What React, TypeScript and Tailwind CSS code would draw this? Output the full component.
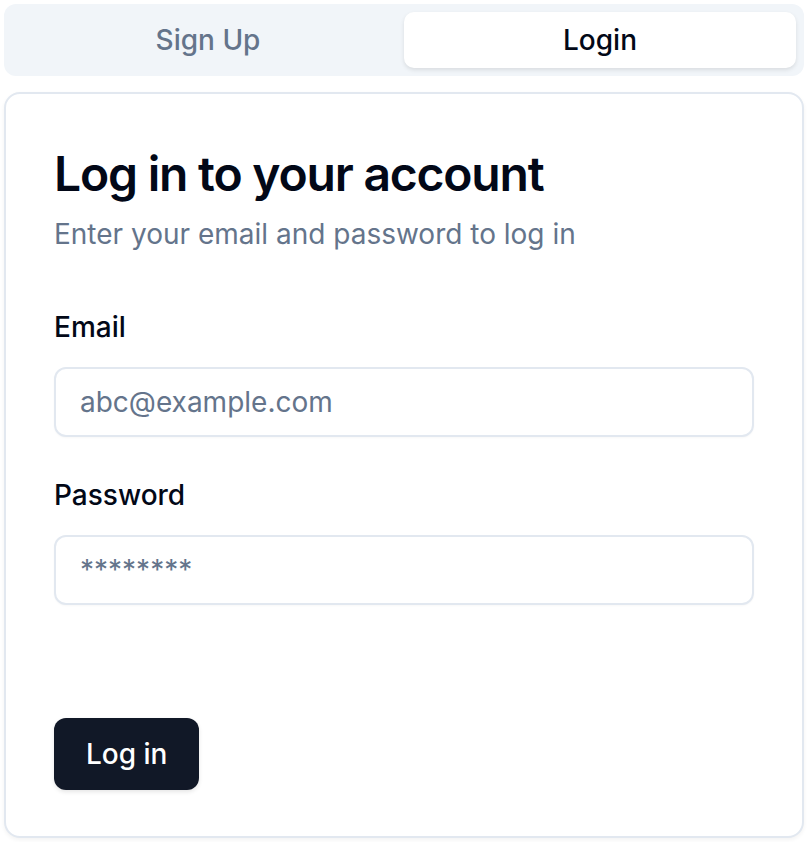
import React from "react";

export default function App() {
  return (
    <div className="w-[808px] p-1 bg-white" style={{ fontFamily: "Inter, 'Noto Sans', sans-serif" }}>
      <div className="flex h-[72px] w-[800px] items-center rounded-[12px] bg-[#f1f5f9] p-2">
        <button className="flex h-[56px] flex-1 items-center justify-center rounded-[10px] text-[28px] font-medium leading-[40px] text-[#64748b]">
          Sign Up
        </button>
        <button className="flex h-[56px] flex-1 items-center justify-center rounded-[10px] bg-white text-[28px] font-medium leading-[40px] text-[#020817] shadow-[0_2px_4px_rgba(0,0,0,0.1)]">
          Login
        </button>
      </div>
      <div className="mt-4 w-[800px] rounded-[16px] border-2 border-[#e2e8f0] bg-white px-[48px] pb-[46px] pt-[48px] shadow-[0_2px_4px_rgba(0,0,0,0.05)]">
        <h1 className="text-[48px] font-semibold leading-[64px] tracking-[-0.025em] text-[#020817]">
          Log in to your account
        </h1>
        <p className="mt-2 text-[28px] leading-[40px] text-[#64748b]">
          Enter your email and password to log in
        </p>
        <div className="mt-[53px]">
          <label className="block text-[28px] font-medium leading-[40px] text-[#020817]">Email</label>
          <input
            type="email"
            placeholder="abc@example.com"
            className="mt-[20px] block h-[70px] w-[700px] rounded-[12px] border-2 border-[#e2e8f0] bg-white px-[24px] text-[28px] text-[#020817] outline-none placeholder:text-[#64748b] shadow-[0_1px_2px_rgba(0,0,0,0.03)]"
          />
        </div>
        <div className="mt-[38px]">
          <label className="block text-[28px] font-medium leading-[40px] text-[#020817]">Password</label>
          <input
            type="password"
            placeholder="********"
            className="mt-[20px] block h-[70px] w-[700px] rounded-[12px] border-2 border-[#e2e8f0] bg-white px-[24px] text-[28px] text-[#020817] outline-none placeholder:text-[#64748b] shadow-[0_1px_2px_rgba(0,0,0,0.03)]"
          />
        </div>
        <button className="mt-[113px] flex h-[72px] items-center justify-center rounded-[12px] bg-[#111827] px-[32px] text-[28px] font-medium leading-[40px] text-white shadow-[0_2px_4px_rgba(0,0,0,0.1)]">
          Log in
        </button>
      </div>
    </div>
  );
}
